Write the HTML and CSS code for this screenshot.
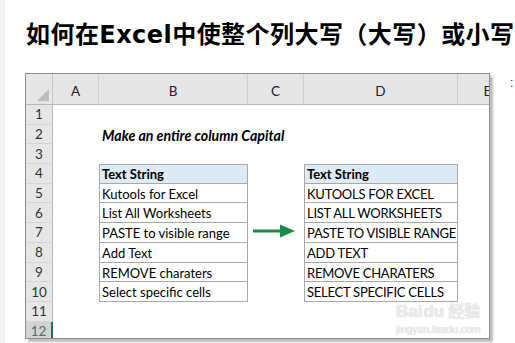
FILE: index.html
```html
<!DOCTYPE html>
<html lang="zh-CN">
<head>
<meta charset="utf-8">
<title>如何在Excel中使整个列大写（大写）或小写</title>
<link rel="stylesheet" href="styles.css">
</head>
<body>
<div class="page">
  <div class="strip"></div>
  <main class="content">
    <h1 class="title">如何在Excel中使整个列大写（大写）或小写</h1>
    <div class="shot">
      <div class="sheet">
        <div class="corner"><span class="tri"></span></div>
        <div class="ch">A</div><div class="ch">B</div><div class="ch">C</div><div class="ch">D</div><div class="ch">E</div>

        <div class="rh">1</div><div class="c"></div><div class="c"></div><div class="c"></div><div class="c"></div><div class="c"></div>
        <div class="rh">2</div><div class="c"></div><div class="c note">Make an entire column Capital</div><div class="c"></div><div class="c"></div><div class="c"></div>
        <div class="rh">3</div><div class="c"></div><div class="c"></div><div class="c"></div><div class="c"></div><div class="c"></div>
        <div class="rh">4</div><div class="c"></div><div class="c tb th top">Text String</div><div class="c"></div><div class="c tb th top">Text String</div><div class="c"></div>
        <div class="rh">5</div><div class="c"></div><div class="c tb">Kutools for Excel</div><div class="c"></div><div class="c tb up">KUTOOLS FOR EXCEL</div><div class="c"></div>
        <div class="rh">6</div><div class="c"></div><div class="c tb">List All Worksheets</div><div class="c"></div><div class="c tb up">LIST ALL WORKSHEETS</div><div class="c"></div>
        <div class="rh">7</div><div class="c"></div><div class="c tb">PASTE to visible range</div><div class="c"></div><div class="c tb up">PASTE TO VISIBLE RANGE</div><div class="c"></div>
        <div class="rh">8</div><div class="c"></div><div class="c tb">Add Text</div><div class="c"></div><div class="c tb up">ADD TEXT</div><div class="c"></div>
        <div class="rh">9</div><div class="c"></div><div class="c tb">REMOVE charaters</div><div class="c"></div><div class="c tb up">REMOVE CHARATERS</div><div class="c"></div>
        <div class="rh">10</div><div class="c"></div><div class="c tb">Select specific cells</div><div class="c"></div><div class="c tb up">SELECT SPECIFIC CELLS</div><div class="c"></div>
        <div class="rh">11</div><div class="c"></div><div class="c"></div><div class="c"></div><div class="c"></div><div class="c"></div>
        <div class="rh sel">12</div><div class="c"></div><div class="c"></div><div class="c"></div><div class="c"></div><div class="c"></div>
      </div>
      <svg class="arrow" width="42" height="14" viewBox="0 0 42 14">
        <rect x="0" y="5.5" width="30" height="3" fill="#1d8a47"/>
        <polygon points="27,0.5 42,7 27,13.5" fill="#1d8a47"/>
      </svg>
      <div class="wm">
        <div class="wm-top"><span class="wm-bai">Bai</span><span class="wm-du">du</span><span class="wm-jy">经验</span></div>
        <div class="wm-url">jingyan.baidu.com</div>
      </div>
    </div>
  </main>
  <span class="edge">:</span>
</div>
</body>
</html>
```

FILE: styles.css
```css
html, body {
  margin: 0;
  padding: 0;
  background: #ffffff;
}

.page {
  display: flex;
  width: 515px;
  height: 343px;
  overflow: hidden;
  position: relative;
}

.strip {
  width: 5px;
  flex: none;
  background: #f3f3f3;
}

.content {
  flex: 1;
  padding: 19px 0 0 21px;
  min-width: 0;
}

.title {
  margin: 0;
  font-family: "DejaVu Sans", "Noto Sans CJK SC", sans-serif;
  font-weight: bold;
  font-size: 24px;
  line-height: 32px;
  letter-spacing: 0.45px;
  color: #000;
  white-space: nowrap;
}

.shot {
  position: relative;
  margin: 22px 0 0 -1px;
  width: 463px;
  height: 264px;
  border: 1px solid #8e8e8e;
  box-shadow: 3px 3px 2px #bdbdbd;
  overflow: hidden;
  background: #fff;
}

.sheet {
  display: grid;
  grid-template-columns: 27px 46px 149px 56px 154px 60px;
  grid-template-rows: 31px repeat(12, 19.7px);
  font-family: Lato, "Liberation Sans", sans-serif;
  font-size: 13px;
  color: #000;
}

.corner {
  background: #e6e6e6;
  border-right: 1px solid #c6c6c6;
  border-bottom: 1px solid #b6b6b6;
  position: relative;
}

.tri {
  position: absolute;
  right: 3px;
  bottom: 3px;
  width: 0;
  height: 0;
  border-left: 12px solid transparent;
  border-bottom: 12px solid #bdbdbd;
}

.ch {
  background: #e6e6e6;
  border-bottom: 1px solid #b6b6b6;
  border-right: 1px solid #d0d0d0;
  display: flex;
  align-items: flex-end;
  justify-content: center;
  padding-bottom: 5px;
  font-size: 13.5px;
  color: #222;
}

.rh {
  background: #e6e6e6;
  border-right: 1px solid #b6b6b6;
  border-bottom: 1px solid #d4d4d4;
  display: flex;
  align-items: center;
  justify-content: center;
  font-size: 13.5px;
  color: #333;
  box-sizing: border-box;
}

.rh.sel {
  background: #d3d3d3;
  border-right: 2px solid #217346;
  color: #5a6e5f;
}

.c {
  white-space: nowrap;
  line-height: 19px;
  padding: 1px 0 0 3px;
  box-sizing: border-box;
  overflow: visible;
}

.note {
  font-weight: bold;
  font-style: italic;
  font-size: 14.2px;
  position: relative;
  z-index: 1;
}

.tb {
  border-left: 1px solid #a8a8a8;
  border-right: 1px solid #a8a8a8;
  border-bottom: 1px solid #a8a8a8;
  overflow: hidden;
  padding-left: 2px;
}

.tb.up {
  letter-spacing: -0.25px;
}

.tb.top {
  border-top: 1px solid #a8a8a8;
  padding-top: 0;
}

.th {
  background: #ddebf7;
  font-weight: bold;
  letter-spacing: 0;
}

.arrow {
  position: absolute;
  left: 227px;
  top: 150px;
}

.wm {
  position: absolute;
  left: 370px;
  top: 227px;
  color: #ececec;
  font-family: "Liberation Sans", "Noto Sans CJK SC", sans-serif;
  text-shadow: 0 0 1px #c4c4c4;
}

.wm-top {
  font-size: 17px;
  line-height: 22px;
  font-weight: bold;
  white-space: nowrap;
}

.wm-du {
  margin-left: 1px;
}

.wm-jy {
  margin-left: 4px;
  font-size: 16px;
}

.wm-url {
  font-size: 10.5px;
  line-height: 13px;
  white-space: nowrap;
}

.edge {
  position: absolute;
  left: 510px;
  top: 76px;
  font-family: "Liberation Sans", sans-serif;
  font-size: 12px;
  color: #333;
}
```
